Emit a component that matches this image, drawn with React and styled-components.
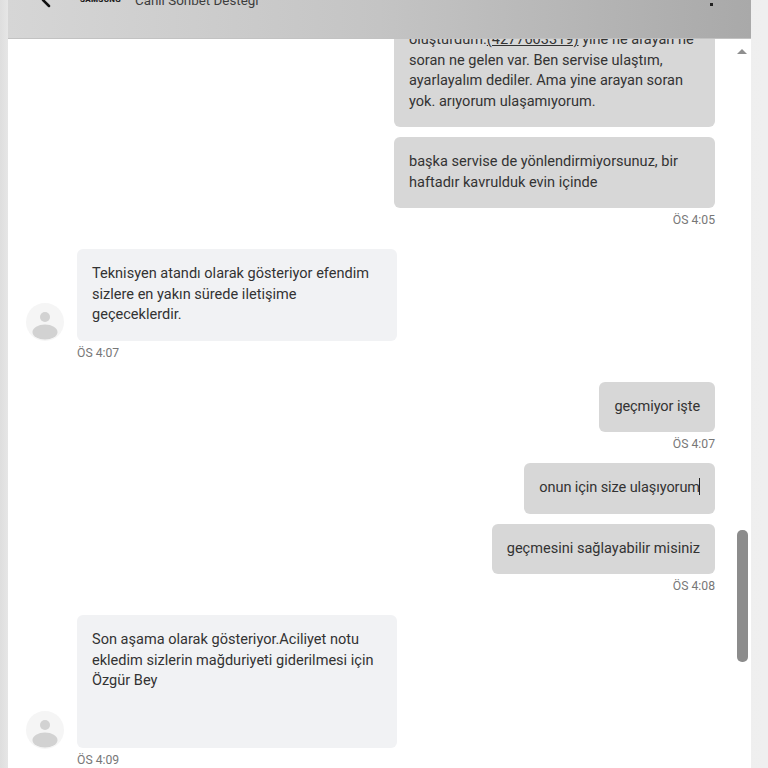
import React from "react";
import styled, { createGlobalStyle } from "styled-components";
import { ChevronLeft } from "lucide-react";

const GlobalStyle = createGlobalStyle`
  html, body {
    margin: 0;
    padding: 0;
    height: 768px;
    overflow: hidden;
    background: #ededed;
    font-family: Roboto, "Liberation Sans", sans-serif;
  }
  * { box-sizing: border-box; }
`;

const Page = styled.div`
  height: 768px;
  padding: 0 17px 0 8px;
  overflow: hidden;
  background: linear-gradient(90deg, #dedede 0, #e6e6e6 8px, #efefef 100%);
`;

const Panel = styled.div`
  height: 768px;
  background: #fff;
  display: flex;
  flex-direction: column;
  overflow: hidden;
`;

const Header = styled.header`
  flex: 0 0 39px;
  position: relative;
  z-index: 1;
  overflow: hidden;
  background: linear-gradient(90deg, #d6d6d6 0%, #c4c4c4 50%, #a9a9a9 100%);
  border-bottom: 1px solid #c2c2c2;
`;

const HeaderRow = styled.div`
  display: flex;
  align-items: center;
  height: 24px;
  margin-top: -12px;
  padding: 0 38px 0 26px;
`;

const BackIcon = styled(ChevronLeft)`
  width: 24px;
  height: 24px;
  color: #111;
  margin-right: 22px;
`;

const Brand = styled.span`
  font-size: 8px;
  font-weight: 900;
  letter-spacing: 0.3px;
  color: #222;
  margin-right: 14px;
  margin-top: -1px;
`;

const Title = styled.span`
  font-size: 13.4px;
  color: #3d3d3d;
  flex: 1;
`;

const MoreDots = styled.span`
  width: 3px;
  height: 3px;
  margin-top: 9px;
  background: #222;
`;

const Body = styled.div`
  flex: 1;
  display: flex;
  min-height: 0;
`;

const MessageList = styled.div`
  flex: 1;
  padding: 0 18px;
  overflow: hidden;
`;

const Group = styled.div`
  display: flex;
  flex-direction: column;
  align-items: ${(p) => (p.$mine ? "flex-end" : "flex-start")};
  margin-top: ${(p) => p.$top}px;
`;

const Row = styled.div`
  display: flex;
  align-items: flex-end;
  gap: 13px;
`;

const Bubble = styled.div`
  width: ${(p) => (p.$width ? `${p.$width}px` : "auto")};
  min-height: ${(p) => (p.$minHeight ? `${p.$minHeight}px` : "0")};
  margin-top: ${(p) => p.$top || 0}px;
  padding: 15px;
  border-radius: 6px;
  background: ${(p) => (p.$mine ? "#d7d7d7" : "#f1f2f4")};
  color: #333;
  font-size: 14.55px;
  line-height: 20.5px;
  letter-spacing: ${(p) => (p.$tight ? "-0.1px" : "normal")};
`;

const Line = styled.div`
  white-space: nowrap;
`;

const OrderLink = styled.span`
  text-decoration: underline;
`;

const Caret = styled.span`
  display: inline-block;
  width: 1px;
  height: 17px;
  margin-left: -1px;
  vertical-align: -3px;
  background: #222;
`;

const Time = styled.div`
  margin-top: 4px;
  margin-left: ${(p) => (p.$mine ? "0" : "51px")};
  font-size: 12.2px;
  line-height: 16px;
  color: #777;
`;

const AvatarCircle = styled.svg`
  flex: 0 0 38px;
  width: 38px;
  height: 38px;
  margin-bottom: ${(p) => p.$drop || 0}px;
`;

const ScrollRail = styled.div`
  flex: 0 0 18px;
  display: flex;
  flex-direction: column;
  align-items: center;
  background: #fff;
`;

const ArrowUp = styled.div`
  width: 0;
  height: 0;
  margin-top: 10px;
  border-left: 5px solid transparent;
  border-right: 5px solid transparent;
  border-bottom: 5px solid #8f8f8f;
`;

const Thumb = styled.div`
  width: 11px;
  height: 132px;
  margin-top: 476px;
  border-radius: 5px;
  background: #8c8c8c;
`;

const Avatar = ({ drop }) => (
  <AvatarCircle viewBox="0 0 38 38" $drop={drop}>
    <circle cx="19" cy="19" r="19" fill="#f5f5f5" />
    <circle cx="19" cy="14" r="5" fill="#d2d2d2" />
    <ellipse cx="19" cy="29" rx="12.5" ry="7.5" fill="#d2d2d2" />
  </AvatarCircle>
);

const App = () => {
  return (
    <Page>
      <GlobalStyle />
      <Panel>
        <Header>
          <HeaderRow>
            <BackIcon strokeWidth={2.5} />
            <Brand>SAMSUNG</Brand>
            <Title>Canlı Sohbet Desteği</Title>
            <MoreDots />
          </HeaderRow>
        </Header>
        <Body>
          <MessageList>
            <Group $mine $top={-24}>
              <Bubble $mine $width={321}>
                <Line>
                  oluşturdum.<OrderLink>(4277603319)</OrderLink> yine ne arayan ne
                </Line>
                <Line>soran ne gelen var. Ben servise ulaştım,</Line>
                <Line>ayarlayalım dediler. Ama yine arayan soran</Line>
                <Line>yok. arıyorum ulaşamıyorum.</Line>
              </Bubble>
              <Bubble $mine $width={321} $top={10}>
                <Line>başka servise de yönlendirmiyorsunuz, bir</Line>
                <Line>haftadır kavrulduk evin içinde</Line>
              </Bubble>
              <Time $mine>ÖS 4:05</Time>
            </Group>

            <Group $top={21}>
              <Row>
                <Avatar />
                <Bubble $width={320}>
                  <Line>Teknisyen atandı olarak gösteriyor efendim</Line>
                  <Line>sizlere en yakın sürede iletişime</Line>
                  <Line>geçeceklerdir.</Line>
                </Bubble>
              </Row>
              <Time>ÖS 4:07</Time>
            </Group>

            <Group $mine $top={21}>
              <Bubble $mine $tight>geçmiyor işte</Bubble>
              <Time $mine>ÖS 4:07</Time>
            </Group>

            <Group $mine $top={11}>
              <Bubble $mine $tight>
                onun için size ulaşıyorum
                <Caret />
              </Bubble>
              <Bubble $mine $top={10}>
                geçmesini sağlayabilir misiniz
              </Bubble>
              <Time $mine>ÖS 4:08</Time>
            </Group>

            <Group $top={21}>
              <Row>
                <Avatar drop={-1} />
                <Bubble $width={320} $minHeight={133}>
                  <Line>Son aşama olarak gösteriyor.Aciliyet notu</Line>
                  <Line>ekledim sizlerin mağduriyeti giderilmesi için</Line>
                  <Line>Özgür Bey</Line>
                </Bubble>
              </Row>
              <Time>ÖS 4:09</Time>
            </Group>
          </MessageList>
          <ScrollRail>
            <ArrowUp />
            <Thumb />
          </ScrollRail>
        </Body>
      </Panel>
    </Page>
  );
};

export default App;
